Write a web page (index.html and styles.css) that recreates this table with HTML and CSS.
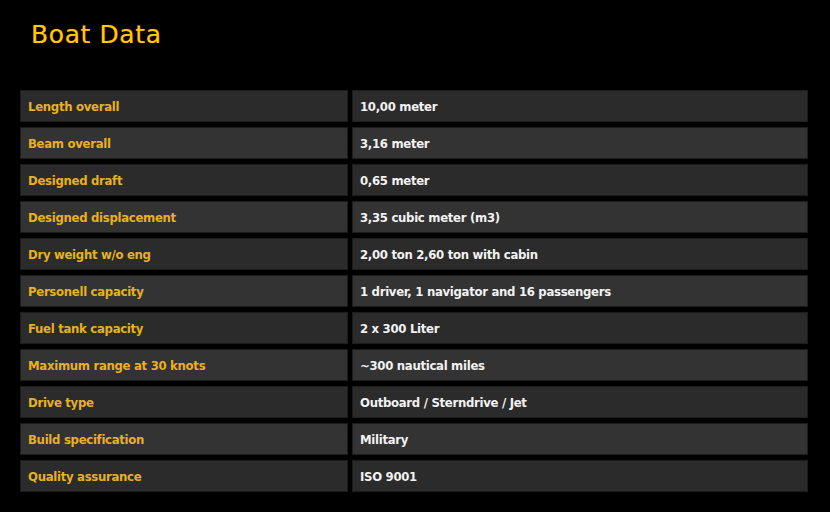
FILE: index.html
```html
<!DOCTYPE html>
<html>
<head>
<meta charset="utf-8">
<link rel="stylesheet" href="styles.css">
</head>
<body>
<div class="page">
  <h1 class="title">Boat Data</h1>
  <div class="table">
    <div class="row"><div class="cell key">Length overall</div><div class="cell val">10,00 meter</div></div>
    <div class="row"><div class="cell key">Beam overall</div><div class="cell val">3,16 meter</div></div>
    <div class="row"><div class="cell key">Designed draft</div><div class="cell val">0,65 meter</div></div>
    <div class="row"><div class="cell key">Designed displacement</div><div class="cell val">3,35 cubic meter (m3)</div></div>
    <div class="row"><div class="cell key">Dry weight w/o eng</div><div class="cell val">2,00 ton 2,60 ton with cabin</div></div>
    <div class="row"><div class="cell key">Personell capacity</div><div class="cell val">1 driver, 1 navigator and 16 passengers</div></div>
    <div class="row"><div class="cell key">Fuel tank capacity</div><div class="cell val">2 x 300 Liter</div></div>
    <div class="row"><div class="cell key">Maximum range at 30 knots</div><div class="cell val">~300 nautical miles</div></div>
    <div class="row"><div class="cell key">Drive type</div><div class="cell val">Outboard / Sterndrive / Jet</div></div>
    <div class="row"><div class="cell key">Build specification</div><div class="cell val">Military</div></div>
    <div class="row"><div class="cell key">Quality assurance</div><div class="cell val">ISO 9001</div></div>
  </div>
</div>
</body>
</html>
```
FILE: styles.css
```css
html, body {
  margin: 0;
  padding: 0;
  background: #000;
}
.page {
  width: 830px;
  height: 512px;
  box-sizing: border-box;
  padding: 20px 22px 0 20px;
  font-family: "DejaVu Sans Condensed", "DejaVu Sans", sans-serif;
}
.title {
  margin: 0 0 0 11px;
  height: 70px;
  font-family: "DejaVu Sans", sans-serif;
  font-weight: normal;
  font-size: 25px;
  line-height: 30px;
  color: #ffcc00;
  text-shadow: 0 0 1px #c03000;
  letter-spacing: 0.6px;
}
.table {
  display: flex;
  flex-direction: column;
  gap: 5px;
}
.row {
  display: grid;
  grid-template-columns: 328px 456px;
  gap: 4px;
}
.cell {
  height: 32px;
  box-sizing: border-box;
  border: 1px solid #1c1c1c;
  background: #2b2b2b;
  padding: 0 7px;
  display: flex;
  align-items: center;
  font-size: 13px;
  font-weight: bold;
  letter-spacing: -0.3px;
}
.row:nth-child(even) .cell {
  background: #333333;
}
.key {
  color: #e8b120;
}
.val {
  color: #f2f2f2;
}
```
